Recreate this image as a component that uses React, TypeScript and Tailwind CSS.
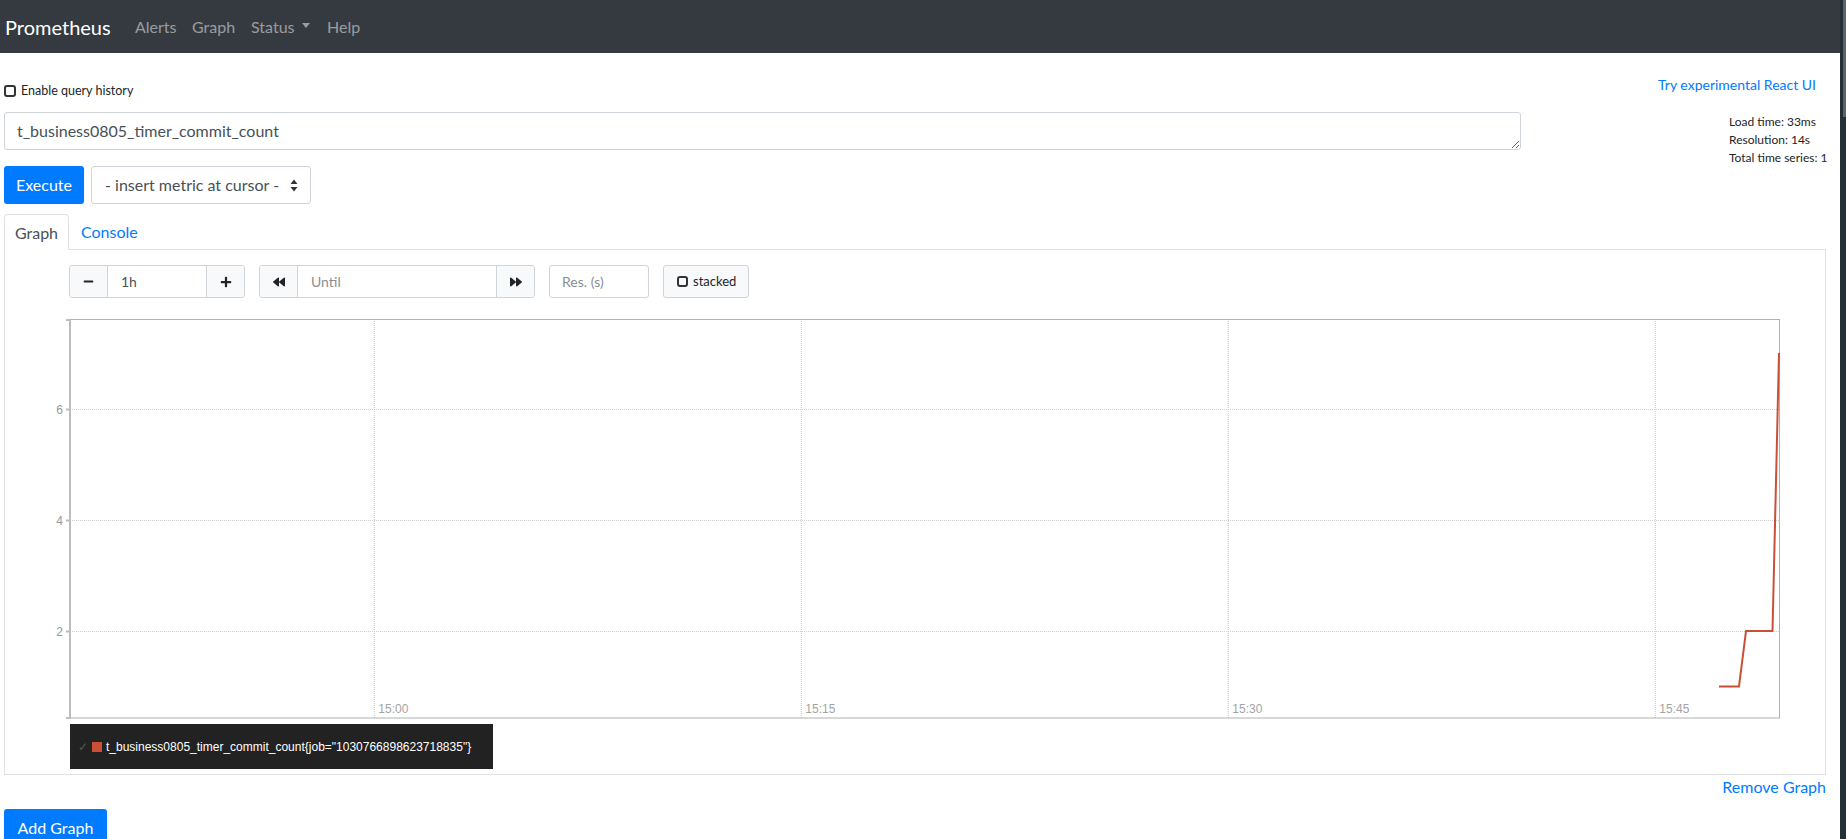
import { FaMinus, FaPlus, FaBackward, FaForward } from "react-icons/fa";

const GRID_X = [
  { x: 369.3, label: "15:00" },
  { x: 796.3, label: "15:15" },
  { x: 1223.3, label: "15:30" },
  { x: 1650.3, label: "15:45" },
];

const GRID_Y = [
  { y: 90, label: "6" },
  { y: 201, label: "4" },
  { y: 312, label: "2" },
];

function Checkbox({ size = 11 }: { size?: number }) {
  return (
    <span
      className="inline-block shrink-0 rounded-[3px] border-2 border-[#333]"
      style={{ width: size, height: size }}
    />
  );
}

function Navbar() {
  return (
    <nav className="flex h-[53px] items-center bg-[#343a40] pl-[5px] text-[16px]">
      <span className="w-[130px] text-[20px] text-white">Prometheus</span>
      <span className="w-[57px] text-white/50">Alerts</span>
      <span className="w-[59px] text-white/50">Graph</span>
      <span className="flex w-[76px] items-center text-white/50">
        Status
        <span className="ml-[7px] mt-[-3px] h-0 w-0 border-x-[4.5px] border-t-[5px] border-x-transparent border-t-[#9a9da0]" />
      </span>
      <span className="text-white/50">Help</span>
    </nav>
  );
}

function Chart() {
  return (
    <svg width={1775} height={400} className="block font-[family-name:'Liberation_Sans',Arial,sans-serif]">
      {GRID_Y.map((g) => (
        <line key={g.label} x1={65} x2={1774} y1={g.y + 0.5} y2={g.y + 0.5} stroke="#cfcfcf" strokeDasharray="1 1" />
      ))}
      {GRID_X.map((g) => (
        <g key={g.label}>
          <line x1={g.x} x2={g.x} y1={0} y2={399} stroke="#c8c8c8" strokeDasharray="1 1" />
          <text x={g.x + 4} y={394} fontSize={12} fill="#a3a3a3">
            {g.label}
          </text>
        </g>
      ))}
      <rect x={65.5} y={0.5} width={1709} height={398.5} fill="none" stroke="#b0b0b0" />
      <line x1={65} x2={65} y1={0} y2={400} stroke="#bdbdbd" strokeWidth={2} />
      {[1, 399, ...GRID_Y.map((g) => g.y + 0.5)].map((y, i) => (
        <line key={i} x1={61} x2={65} y1={y} y2={y} stroke="#bdbdbd" strokeWidth={2} />
      ))}
      {GRID_Y.map((g) => (
        <text key={g.label} x={58} y={g.y + 4.5} fontSize={12} fill="#999" textAnchor="end">
          {g.label}
        </text>
      ))}
      <polyline
        points="1714,367.5 1734,367.5 1741,312 1767.5,312 1774,34"
        fill="none"
        stroke="#cb4f37"
        strokeWidth={2}
      />
    </svg>
  );
}

function Controls() {
  const btn = "flex h-full items-center justify-center bg-[#f8f9fa] text-[#212529]";
  return (
    <div className="ml-[64px] flex h-[33px] gap-[14px] text-[14px]">
      <div className="flex overflow-hidden rounded-[3px] border border-[#ced4da]">
        <div className={`${btn} w-[38px] border-r border-[#ced4da]`}>
          <FaMinus className="h-[11px] w-[11px]" />
        </div>
        <div className="flex w-[99px] items-center border-r border-[#ced4da] bg-white pl-[13px] text-[#495057]">
          1h
        </div>
        <div className={`${btn} w-[37px]`}>
          <FaPlus className="h-[12px] w-[12px]" />
        </div>
      </div>
      <div className="flex overflow-hidden rounded-[3px] border border-[#ced4da]">
        <div className={`${btn} w-[38px] border-r border-[#ced4da]`}>
          <FaBackward className="h-[12px] w-[12px]" />
        </div>
        <div className="flex w-[199px] items-center border-r border-[#ced4da] bg-white pl-[13px] text-[#8a8f94]">
          Until
        </div>
        <div className={`${btn} w-[37px]`}>
          <FaForward className="h-[12px] w-[12px]" />
        </div>
      </div>
      <div className="flex w-[100px] items-center rounded-[3px] border border-[#ced4da] bg-white pl-[12px] text-[#8a8f94]">
        Res. (s)
      </div>
      <div className="flex w-[86px] items-center rounded-[3px] border border-[#ced4da] bg-[#f8f9fa] pl-[13px] text-[13px] text-[#212529]">
        <Checkbox size={11} />
        <span className="ml-[5px]">stacked</span>
      </div>
    </div>
  );
}

export default function App() {
  return (
    <div className="flex min-h-[839px] w-full overflow-hidden bg-white font-[family-name:'Segoe_UI',Lato,'Liberation_Sans',sans-serif] text-[#212529]">
      <div className="min-w-0 flex-1">
        <Navbar />
        <div className="pl-[4px]">
          {/* query history + react ui link */}
          <div className="flex h-[59px] items-start justify-between">
            <label className="mt-[31px] flex h-[14px] items-center text-[12.5px]">
              <Checkbox size={12} />
              <span className="ml-[5px]">Enable query history</span>
            </label>
            <a className="mr-[24px] mt-[23px] text-[14px] leading-[18px] text-[#007bff]">Try experimental React UI</a>
          </div>

          {/* expression */}
          <div className="flex h-[38px] items-start">
            <textarea
              readOnly
              rows={1}
              value="t_business0805_timer_commit_count"
              className="h-[38px] w-[1517px] shrink-0 rounded-[3px] border border-[#ced4da] px-[12px] py-[6px] text-[16px] leading-[24px] text-[#495057] outline-none"
            />
            <div className="ml-[208px] mt-[1px] text-[12px] leading-[18px] text-[#212529]">
              <div>Load time: 33ms</div>
              <div>Resolution: 14s</div>
              <div>Total time series: 1</div>
            </div>
          </div>

          <div className="mt-[16px] flex h-[38px] gap-[7px] text-[16px]">
            <button className="w-[80px] rounded-[3px] bg-[#007bff] text-white">Execute</button>
            <div className="flex w-[220px] items-center justify-between rounded-[3px] border border-[#ced4da] pl-[13px] pr-[12px] text-[#495057]">
              <span>- insert metric at cursor -</span>
              <svg width="8" height="13" viewBox="0 0 8 13">
                <path d="M4 0.5 L7.5 5 L0.5 5 Z M4 12.5 L7.5 8 L0.5 8 Z" fill="#333" />
              </svg>
            </div>
          </div>

          {/* tabs */}
          <div className="mt-[10px] flex h-[36px] w-[1822px] border-b border-[#dee2e6] text-[16px]">
            <div className="-mb-px flex w-[65px] items-center justify-center rounded-t-[4px] border border-b-0 border-[#dee2e6] bg-white text-[#495057]">
              Graph
            </div>
            <div className="flex items-center px-[12px] text-[#007bff]">Console</div>
          </div>

          <div className="w-[1822px] border-x border-b border-[#dee2e6] pb-[5px] pt-[15px]">
            <Controls />
            <div className="mt-[21px]">
              <Chart />
            </div>
            <div className="ml-[65px] mt-[5px] flex h-[45px] w-[423px] items-center bg-[#222] pl-[8px] font-[family-name:'Liberation_Sans',Arial,sans-serif] text-[12px] text-white">
              <span className="w-[14px] text-[#555]">✓</span>
              <span className="mr-[4px] h-[10px] w-[10px] bg-[#cb4f37]" />
              <span>t_business0805_timer_commit_count{'{'}job="1030766898623718835"{'}'}</span>
            </div>
          </div>

          <div className="w-[1822px] text-right text-[16px] leading-[24px] text-[#007bff]">Remove Graph</div>

          <button className="mt-[10px] h-[38px] w-[103px] rounded-[3px] bg-[#007bff] text-[16px] text-white">
            Add Graph
          </button>
        </div>
      </div>
      <div className="flex w-[6px] shrink-0 justify-end bg-[#243238]">
        <div className="h-[117px] w-[3px] bg-[#5c6468]" />
      </div>
    </div>
  );
}
